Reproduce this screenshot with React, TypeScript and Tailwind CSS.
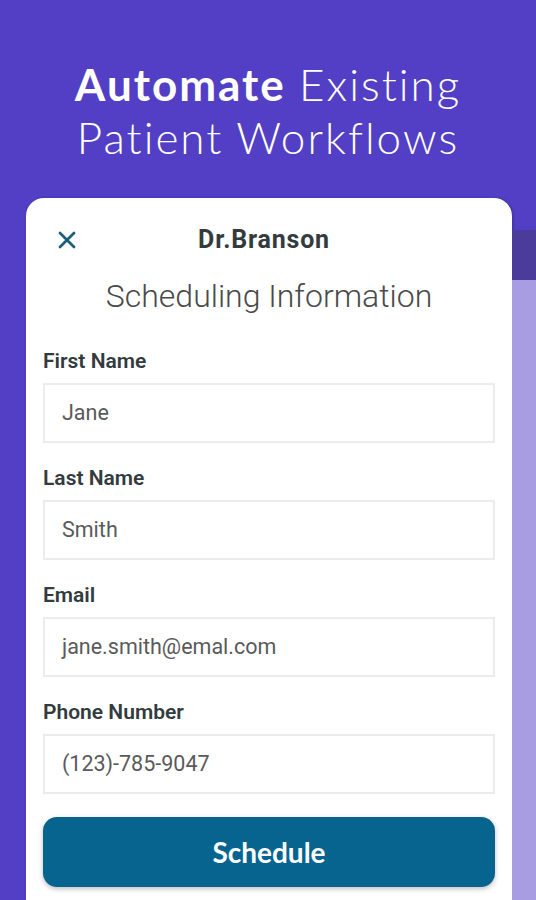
import { X } from "lucide-react";

const fields = [
  { label: "First Name", value: "Jane" },
  { label: "Last Name", value: "Smith" },
  { label: "Email", value: "jane.smith@emal.com" },
  { label: "Phone Number", value: "(123)-785-9047" },
];

function Field({ label, value }: { label: string; value: string }) {
  return (
    <div className="mb-[23px]">
      <label className="block text-[21px] leading-[24px] font-semibold text-[#323b3e]">{label}</label>
      <div className="mt-[10px] h-[60px] border-2 border-[#ececec] flex items-center pl-[17px] text-[21.5px] text-[#5a5a5a]">
        {value}
      </div>
    </div>
  );
}

export default function App() {
  return (
    <div className="w-[536px] h-[900px] overflow-hidden bg-[#533fc6] flex flex-col font-['Roboto','Liberation_Sans',sans-serif]">
      <h1 className="pt-[58px] text-center text-white text-[44px] leading-[53px] font-['Lato','Liberation_Sans',sans-serif] tracking-[2px]">
        <span className="font-bold">Automate</span> <span className="font-light">Existing</span>
        <br />
        <span className="font-light">Patient Workflows</span>
      </h1>

      <div className="mt-[34px] flex flex-1 pl-[26px]">
        <section className="w-[486px] bg-white rounded-t-[18px] px-[17px] pt-[28px] shadow-[1px_0_3px_rgba(30,20,80,0.35)]">
          {/* header */}
          <div className="grid grid-cols-[1fr_auto_1fr] items-center h-[28px]">
            <X className="ml-[10px] h-[28px] w-[28px] text-[#1c5f7d]" strokeWidth={2.4} />
            <h2 className="text-[25px] leading-[28px] font-bold tracking-[0.8px] text-[#333b3d] -ml-[10px]">Dr.Branson</h2>
            <span />
          </div>
          <p className="mt-[24px] text-center text-[32px] leading-[36px] font-light text-[#4a4a4a]">
            Scheduling Information
          </p>

          <div className="mt-[35px]">
            {fields.map((f) => (
              <Field key={f.label} label={f.label} value={f.value} />
            ))}
          </div>

          <button className="w-full h-[70px] rounded-[14px] bg-[#06648f] text-white text-[28px] font-bold font-['Lato','Liberation_Sans',sans-serif] shadow-[0_2px_5px_rgba(0,0,0,0.25)]">
            Schedule
          </button>
        </section>

        <div className="flex-1 flex flex-col pt-[32px]">
          <div className="h-[50px] bg-[#4b3b9b]" />
          <div className="flex-1 bg-[#a89de2]" />
        </div>
      </div>
    </div>
  );
}
